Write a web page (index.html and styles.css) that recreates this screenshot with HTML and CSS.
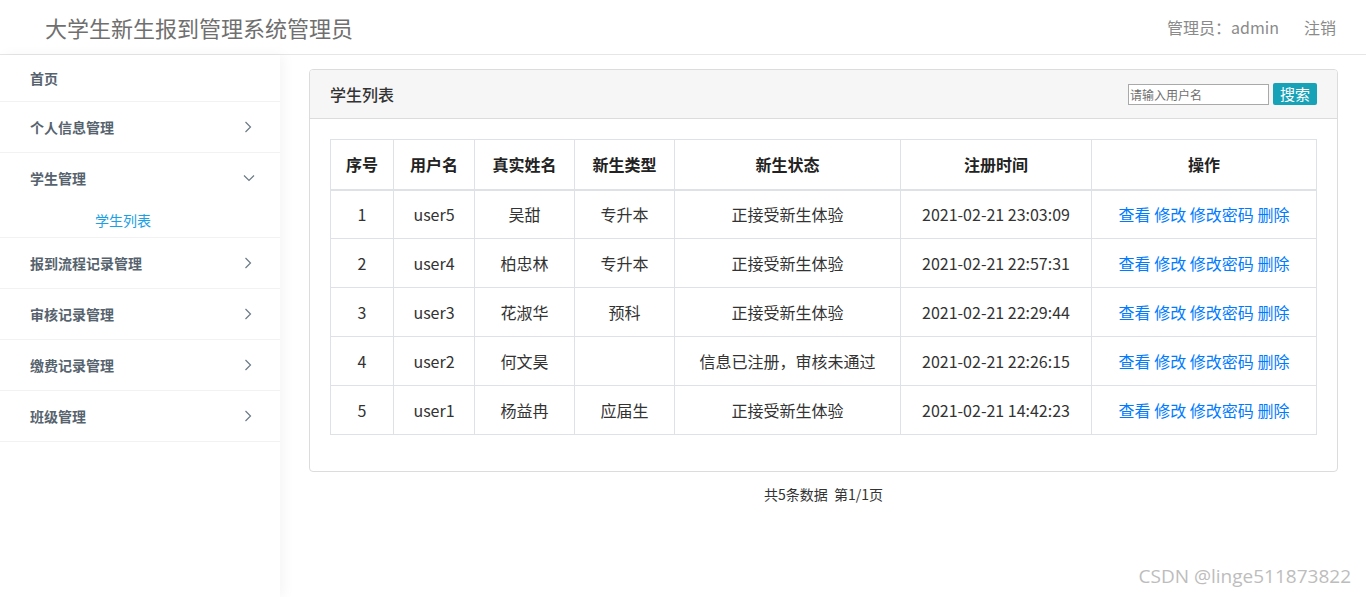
FILE: index.html
```html
<!DOCTYPE html>
<html lang="zh">
<head>
<meta charset="utf-8">
<title>学生列表</title>
<link rel="stylesheet" href="styles.css">
</head>
<body>
<header class="topbar">
  <div class="brand">大学生新生报到管理系统管理员</div>
  <div class="user">
    <span>管理员：admin</span>
    <span class="logout">注销</span>
  </div>
</header>
<div class="layout">
  <aside class="sidebar">
    <div class="nav-item first"><span>首页</span></div>
    <div class="nav-item"><span>个人信息管理</span>
      <svg class="chev" width="10" height="14" viewBox="0 0 10 14"><path d="M2.5 2 L7.5 7 L2.5 12" fill="none" stroke="#6b7a86" stroke-width="1.2"/></svg>
    </div>
    <div class="nav-group">
      <div class="nav-item open"><span>学生管理</span>
        <svg class="chev down" width="14" height="10" viewBox="0 0 14 10"><path d="M2 2.5 L7 7.5 L12 2.5" fill="none" stroke="#6b7a86" stroke-width="1.2"/></svg>
      </div>
      <div class="sub-item">学生列表</div>
    </div>
    <div class="nav-item"><span>报到流程记录管理</span>
      <svg class="chev" width="10" height="14" viewBox="0 0 10 14"><path d="M2.5 2 L7.5 7 L2.5 12" fill="none" stroke="#6b7a86" stroke-width="1.2"/></svg>
    </div>
    <div class="nav-item"><span>审核记录管理</span>
      <svg class="chev" width="10" height="14" viewBox="0 0 10 14"><path d="M2.5 2 L7.5 7 L2.5 12" fill="none" stroke="#6b7a86" stroke-width="1.2"/></svg>
    </div>
    <div class="nav-item"><span>缴费记录管理</span>
      <svg class="chev" width="10" height="14" viewBox="0 0 10 14"><path d="M2.5 2 L7.5 7 L2.5 12" fill="none" stroke="#6b7a86" stroke-width="1.2"/></svg>
    </div>
    <div class="nav-item"><span>班级管理</span>
      <svg class="chev" width="10" height="14" viewBox="0 0 10 14"><path d="M2.5 2 L7.5 7 L2.5 12" fill="none" stroke="#6b7a86" stroke-width="1.2"/></svg>
    </div>
  </aside>
  <main class="main">
    <section class="panel">
      <div class="panel-head">
        <div class="panel-title">学生列表</div>
        <div class="search">
          <input class="search-input" type="text" placeholder="请输入用户名">
          <button class="search-btn">搜索</button>
        </div>
      </div>
      <div class="panel-body">
        <table class="grid">
          <colgroup>
            <col class="c1"><col class="c2"><col class="c3"><col class="c4"><col class="c5"><col class="c6"><col class="c7">
          </colgroup>
          <thead>
            <tr><th>序号</th><th>用户名</th><th>真实姓名</th><th>新生类型</th><th>新生状态</th><th>注册时间</th><th>操作</th></tr>
          </thead>
          <tbody>
            <tr><td>1</td><td>user5</td><td>吴甜</td><td>专升本</td><td>正接受新生体验</td><td>2021-02-21 23:03:09</td><td class="ops"><a>查看</a> <a>修改</a> <a>修改密码</a> <a>删除</a></td></tr>
            <tr><td>2</td><td>user4</td><td>柏忠林</td><td>专升本</td><td>正接受新生体验</td><td>2021-02-21 22:57:31</td><td class="ops"><a>查看</a> <a>修改</a> <a>修改密码</a> <a>删除</a></td></tr>
            <tr><td>3</td><td>user3</td><td>花淑华</td><td>预科</td><td>正接受新生体验</td><td>2021-02-21 22:29:44</td><td class="ops"><a>查看</a> <a>修改</a> <a>修改密码</a> <a>删除</a></td></tr>
            <tr><td>4</td><td>user2</td><td>何文昊</td><td></td><td>信息已注册，审核未通过</td><td>2021-02-21 22:26:15</td><td class="ops"><a>查看</a> <a>修改</a> <a>修改密码</a> <a>删除</a></td></tr>
            <tr><td>5</td><td>user1</td><td>杨益冉</td><td>应届生</td><td>正接受新生体验</td><td>2021-02-21 14:42:23</td><td class="ops"><a>查看</a> <a>修改</a> <a>修改密码</a> <a>删除</a></td></tr>
          </tbody>
        </table>
      </div>
    </section>
    <div class="pager">共5条数据&nbsp;&nbsp;第1/1页</div>
  </main>
</div>
<div class="watermark">CSDN @linge511873822</div>
</body>
</html>
```

FILE: styles.css
```css
* { box-sizing: border-box; }
html, body { margin: 0; padding: 0; height: 100%; }
body {
  font-family: "Noto Sans CJK SC", "Noto Sans", sans-serif;
  color: #333;
  background: #fff;
  overflow: hidden;
}
.topbar {
  height: 55px;
  border-bottom: 1px solid #e6e6e6;
  display: flex;
  align-items: center;
  justify-content: space-between;
  padding: 0 30px 0 45px;
}
.brand {
  font-size: 22px;
  color: #6f6f6f;
  line-height: 1;
  margin-top: -1px;
}
.user {
  display: flex;
  gap: 25px;
  font-size: 16px;
  color: #8a8a8a;
  margin-top: -1px;
}
.layout {
  display: flex;
  height: calc(100% - 55px);
}
.sidebar {
  width: 280px;
  flex: none;
  background: #fff;
  box-shadow: 4px 0 12px rgba(0,0,0,0.045);
  position: relative;
  z-index: 1;
}
.nav-item {
  height: 51px;
  border-bottom: 1px solid #f2f2f2;
  display: flex;
  align-items: center;
  justify-content: space-between;
  padding: 0 25px 0 30px;
  font-size: 14px;
  font-weight: bold;
  color: #56636e;
}
.nav-item.first { height: 47px; }
.nav-item.open { border-bottom: none; height: 50px; }
.chev { display: block; margin-right: 2px; }
.chev.down { margin-right: -1px; }
.nav-group { border-bottom: 1px solid #f2f2f2; }
.sub-item {
  height: 34px;
  padding-left: 95px;
  font-size: 14px;
  color: #1aa0e6;
  line-height: 34px;
}
.main {
  flex: 1;
  padding: 14px 29px 0 29px;
}
.panel {
  border: 1px solid #dcdcdc;
  border-radius: 4px;
  overflow: hidden;
}
.panel-head {
  height: 49px;
  background: #f6f6f6;
  border-bottom: 1px solid #dcdcdc;
  display: flex;
  align-items: center;
  justify-content: space-between;
  padding: 0 20px;
}
.panel-title { font-size: 16px; color: #333; font-weight: 500; }
.search { display: flex; align-items: center; gap: 4px; }
.search-input {
  width: 141px;
  height: 21px;
  border: 1px solid #a9a9a9;
  padding: 0 1px;
  font-size: 12px;
  font-family: "Noto Sans CJK SC", sans-serif;
  background: #fff;
  outline: none;
}
.search-input::placeholder { color: #6f6f6f; }
.search-btn {
  width: 44px;
  height: 22px;
  border: none;
  border-radius: 2px;
  background: #17a2b8;
  color: #fff;
  font-size: 15px;
  padding: 0;
  line-height: 22px;
  font-family: "Noto Sans CJK SC", sans-serif;
}
.panel-body { padding: 20px 20px 36px 20px; }
.grid {
  width: 986px;
  border-collapse: collapse;
  table-layout: fixed;
  font-size: 16px;
}
.c1 { width: 63px; } .c2 { width: 81px; } .c3 { width: 100px; } .c4 { width: 100px; }
.c5 { width: 226px; } .c6 { width: 191px; } .c7 { width: 225px; }
.grid th, .grid td {
  border: 1px solid #dee2e6;
  text-align: center;
  vertical-align: middle;
  padding: 0;
}
.grid th {
  height: 50px;
  font-size: 16px;
  font-weight: bold;
  color: #222;
  border-bottom: 2px solid #dee2e6;
}
.grid td { height: 49px; color: #333; }
.ops a { color: #007bff; cursor: pointer; }
.pager {
  text-align: center;
  font-size: 14px;
  color: #333;
  margin-top: 12px;
  line-height: 20px;
}
.watermark {
  position: absolute;
  right: 15px;
  bottom: 8px;
  font-family: "Open Sans", sans-serif;
  font-size: 19px;
  color: #bdbdbd;
}
```
